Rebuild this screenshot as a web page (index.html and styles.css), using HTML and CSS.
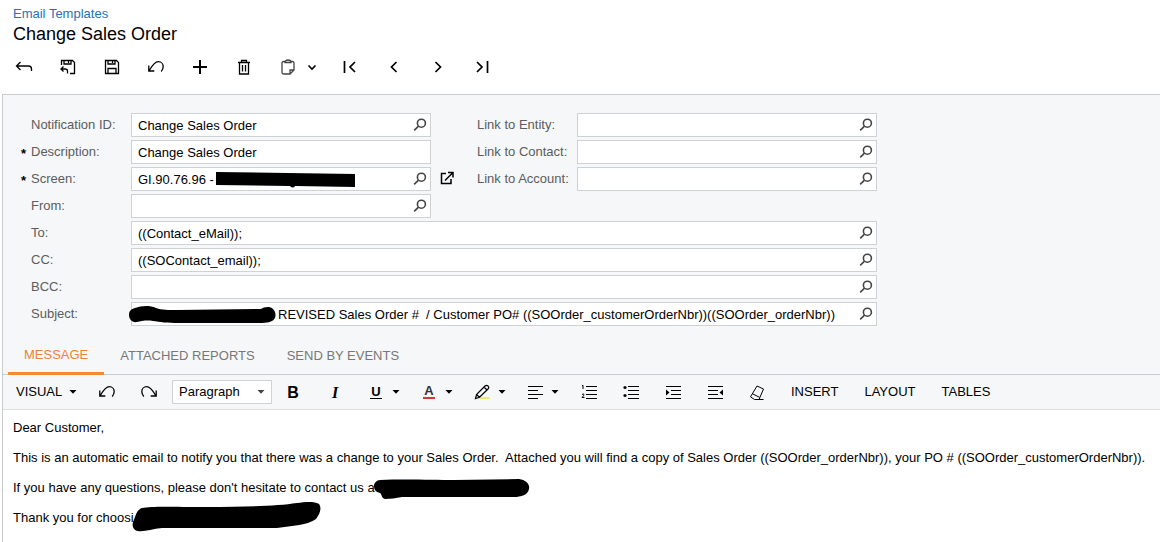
FILE: index.html
```html
<!DOCTYPE html>
<html lang="en">
<head>
<meta charset="utf-8">
<meta name="viewport" content="width=device-width, initial-scale=1">
<title>Email Templates - Change Sales Order</title>
<link rel="stylesheet" href="styles.css">
</head>
<body>
<svg class="sprite" aria-hidden="true">
  <symbol id="lookup" viewBox="0 0 14 14"><circle cx="8.4" cy="5.2" r="4"/><path d="M5.500 8.200 1.200 12.300"/></symbol>
  <symbol id="caret" viewBox="0 0 8 8"><path d="M.5 2h7L4 5.800z"/></symbol>
  <symbol id="undo" viewBox="0 0 18 18"><path d="M1.800 7.500v5.500h5.500M2.200 12.600C4.600 8.600 7.500 3.700 11.400 3.700c2.800 0 4.800 2.200 4.800 4.900 0 2-.8 3.600-2 4.900"/></symbol>
  <symbol id="redo" viewBox="0 0 18 18"><path d="M16.200 7.500v5.500h-5.500M15.800 12.600C13.400 8.600 10.500 3.700 6.600 3.700 3.800 3.700 1.800 5.900 1.800 8.600c0 2 .8 3.600 2 4.900"/></symbol>
</svg>

<header class="page-head">
  <a class="crumb" href="#">Email Templates</a>
  <h1 class="title">Change Sales Order</h1>
</header>

<div class="actions" role="toolbar" aria-label="Record actions">
  <button class="action" type="button" aria-label="Back"><svg class="icon" viewBox="0 0 18 18"><path d="M5.500 4 1.500 8l4 4M1.500 8h12c2 0 3 1.200 3 3v2"/></svg></button>
  <button class="action" type="button" aria-label="Save and close"><svg class="icon" viewBox="0 0 18 18"><path d="M2.500 7V2.500h11l2 2v11H11M5 2.500v3.500h7V2.500M9.500 3v2M4.500 8.500 2 11l2.500 2.500M2 11h4c1.500 0 2.500.8 2.500 2v2.500"/></svg></button>
  <button class="action" type="button" aria-label="Save"><svg class="icon" viewBox="0 0 18 18"><path d="M2.500 2.500h11l2 2v11h-13zM5 2.500v3.500h7V2.500M9.500 3v2M5 15.500V10.500h8v5"/></svg></button>
  <button class="action" type="button" aria-label="Undo"><svg class="icon"><use href="#undo"/></svg></button>
  <button class="action" type="button" aria-label="Add"><svg class="icon icon-bold" viewBox="0 0 18 18"><path d="M9 2v14M2 9h14"/></svg></button>
  <button class="action" type="button" aria-label="Delete"><svg class="icon" viewBox="0 0 18 18"><path d="M3 4.500h12M6.500 4.500V2.500h5v2M4.500 4.500v11.500h9V4.500M7.500 7v6.500M10.500 7v6.500"/></svg></button>
  <button class="action action-menu" type="button" aria-label="Clipboard"><svg class="icon icon-soft" viewBox="0 0 18 18"><path d="M6 3.500H4.500q-1.500 0-1.500 1.500v9.500q0 1.500 1.500 1.500H11l4-4V5q0-1.500-1.500-1.500H12M6 4.500q0-2.500 3-2.500t3 2.500zM11 16v-4h4"/></svg><svg class="chevron" viewBox="0 0 10 10"><path d="M1.500 3.500 5 7l3.500-3.500"/></svg></button>
  <button class="action" type="button" aria-label="First"><svg class="icon icon-nav" viewBox="0 0 18 18"><path d="M3.500 3v12M14 4 9 9l5 5"/></svg></button>
  <button class="action" type="button" aria-label="Previous"><svg class="icon icon-nav" viewBox="0 0 18 18"><path d="M11.500 4l-5 5 5 5"/></svg></button>
  <button class="action" type="button" aria-label="Next"><svg class="icon icon-nav" viewBox="0 0 18 18"><path d="M6.500 4l5 5-5 5"/></svg></button>
  <button class="action" type="button" aria-label="Last"><svg class="icon icon-nav" viewBox="0 0 18 18"><path d="M4 4l5 5-5 5M14.500 3v12"/></svg></button>
</div>

<main class="panel">
  <form class="form">
    <label class="label" for="nid">Notification ID:</label>
    <div class="field"><input class="input" id="nid" value="Change Sales Order"><button class="lookup" type="button" aria-label="Find notification"><svg><use href="#lookup"/></svg></button></div>
    <label class="label label-right" for="entity">Link to Entity:</label>
    <div class="field"><input class="input" id="entity"><button class="lookup" type="button" aria-label="Find entity"><svg><use href="#lookup"/></svg></button></div>

    <label class="label required" for="desc">Description:</label>
    <div class="field"><input class="input" id="desc" value="Change Sales Order"></div>
    <label class="label label-right" for="contact">Link to Contact:</label>
    <div class="field"><input class="input" id="contact"><button class="lookup" type="button" aria-label="Find contact"><svg><use href="#lookup"/></svg></button></div>

    <label class="label required" for="screen">Screen:</label>
    <div class="field"><input class="input" id="screen" value="GI.90.76.96 -"><svg class="redact redact-screen" viewBox="0 0 140 18"><path d="M0 1 139 3v13L79 15q-2 3-5 0L0 14z"/></svg><button class="lookup" type="button" aria-label="Find screen"><svg><use href="#lookup"/></svg></button></div>
    <button class="open" type="button" aria-label="Open screen"><svg viewBox="0 0 14 14"><path d="M6 2.500H1.500v10H11V8M8 1.500h5v5M13 1.500 5 9.500"/></svg></button>
    <label class="label label-right" for="account">Link to Account:</label>
    <div class="field"><input class="input" id="account"><button class="lookup" type="button" aria-label="Find account"><svg><use href="#lookup"/></svg></button></div>

    <label class="label" for="from">From:</label>
    <div class="field"><input class="input" id="from"><button class="lookup" type="button" aria-label="Find sender"><svg><use href="#lookup"/></svg></button></div>

    <label class="label" for="to">To:</label>
    <div class="field field-wide"><input class="input" id="to" value="((Contact_eMail));"><button class="lookup" type="button" aria-label="Find recipient"><svg><use href="#lookup"/></svg></button></div>

    <label class="label" for="cc">CC:</label>
    <div class="field field-wide"><input class="input" id="cc" value="((SOContact_email));"><button class="lookup" type="button" aria-label="Find CC"><svg><use href="#lookup"/></svg></button></div>

    <label class="label" for="bcc">BCC:</label>
    <div class="field field-wide"><input class="input" id="bcc"><button class="lookup" type="button" aria-label="Find BCC"><svg><use href="#lookup"/></svg></button></div>

    <label class="label" for="subject">Subject:</label>
    <div class="field field-wide"><input class="input input-subject" id="subject" value="REVISED Sales Order #  / Customer PO# ((SOOrder_customerOrderNbr))((SOOrder_orderNbr))"><svg class="redact redact-subject" viewBox="0 0 147 18"><path d="M6 2C12 0 20-1 27 2 33 4 39 4 48 4L132 3C135 1 141 0 144 3 148 7 147 13 143 15 139 17 134 17 128 17L50 17C38 17 31 16 24 15 18 14 12 15 8 16 3 17 0 13 0 9 0 5 2 3 6 2z"/></svg><button class="lookup" type="button" aria-label="Find subject field"><svg><use href="#lookup"/></svg></button></div>
  </form>

  <div class="tabs" role="tablist">
    <button class="tab tab-active" type="button" role="tab" aria-selected="true">MESSAGE</button>
    <button class="tab" type="button" role="tab" aria-selected="false">ATTACHED REPORTS</button>
    <button class="tab" type="button" role="tab" aria-selected="false">SEND BY EVENTS</button>
  </div>

  <div class="editbar" role="toolbar" aria-label="Formatting">
    <button class="text-tool visual" type="button">VISUAL<svg class="caret"><use href="#caret"/></svg></button>
    <button class="tool" type="button" aria-label="Undo"><svg class="icon"><use href="#undo"/></svg></button>
    <button class="tool" type="button" aria-label="Redo"><svg class="icon"><use href="#redo"/></svg></button>
    <div class="style-box"><select class="style-select" aria-label="Paragraph style"><option>Paragraph</option></select><svg class="caret caret-select"><use href="#caret"/></svg></div>
    <button class="tool letter bold" type="button">B</button>
    <button class="tool letter italic" type="button">I</button>
    <button class="tool split" type="button" aria-label="Underline"><span class="glyph glyph-under">U</span><svg class="caret"><use href="#caret"/></svg></button>
    <button class="tool split" type="button" aria-label="Text colour"><span class="glyph glyph-color">A</span><svg class="caret"><use href="#caret"/></svg></button>
    <button class="tool split" type="button" aria-label="Highlight"><svg class="glyph-svg" viewBox="0 0 16 16"><path class="marker" d="M5 14h10.500"/><path d="M1.500 14.500l1-4 8.500-8.500q1.500-1.300 3 0t0 3L5.500 13.300zM2.500 10.500l3 2.800M10 3l3 3"/></svg><svg class="caret"><use href="#caret"/></svg></button>
    <button class="tool split" type="button" aria-label="Align"><svg class="glyph-svg" viewBox="0 0 16 16"><path d="M1 2.500h15M1 6.500h10M1 10.500h15M1 14.500h10"/></svg><svg class="caret"><use href="#caret"/></svg></button>
    <button class="tool" type="button" aria-label="Numbered list"><svg class="glyph-svg" viewBox="0 0 16 16"><path d="M5 2.500h11M5 6.500h11M5 10.500h11M5 14.500h11"/><path class="fine" d="M1 2l1-.7V5M1 10.500q1.500-1.200 2 0 0 1-2 3h2.500"/></svg></button>
    <button class="tool" type="button" aria-label="Bulleted list"><svg class="glyph-svg" viewBox="0 0 16 16"><path d="M5 2.500h11M5 6.500h11M5 10.500h11M5 14.500h11"/><circle class="solid" cx="2" cy="3.500" r="1.600"/><circle class="solid" cx="2" cy="11.500" r="1.600"/></svg></button>
    <button class="tool" type="button" aria-label="Indent"><svg class="glyph-svg" viewBox="0 0 16 16"><path d="M1 2.500h15M6 6.500h10M6 10.500h10M1 14.500h15"/><path class="solid" d="M1 5.500v6l3.500-3z"/></svg></button>
    <button class="tool" type="button" aria-label="Outdent"><svg class="glyph-svg" viewBox="0 0 16 16"><path d="M1 2.500h15M1 6.500h10M1 10.500h10M1 14.500h15"/><path class="solid" d="M16 5.500v6l-3.500-3z"/></svg></button>
    <button class="tool" type="button" aria-label="Clear formatting"><svg class="glyph-svg" viewBox="0 0 16 16"><path class="fine" d="M8 2l6.500 3L10 15.500H5.500L1.500 12.800zM3.500 9.800l7 3.500M7 15.500h7.500"/></svg></button>
    <button class="text-tool" type="button">INSERT</button>
    <button class="text-tool" type="button">LAYOUT</button>
    <button class="text-tool" type="button">TABLES</button>
  </div>

  <article class="message">
    <p>Dear Customer,</p>
    <p class="spaced">This is an automatic email to notify you that there was a change to your Sales Order.  Attached you will find a copy of Sales Order ((SOOrder_orderNbr)), your PO # ((SOOrder_customerOrderNbr)).</p>
    <p class="masked">If you have any questions, please don't hesitate to contact us a<svg class="scribble scribble-contact" viewBox="0 0 156 20"><path d="M6 1C30 0 60 1 80 1L145 0C152 1 156 5 155 10 154 16 147 18 140 18L80 18 28 18C22 19 16 20 11 20 7 19 8 15 6 14 2 13 0 11 0 7 0 4 3 1 6 1z"/></svg></p>
    <p class="masked">Thank you for choosi<svg class="scribble scribble-company" viewBox="0 0 190 30"><path d="M10 6C20 4 40 5 75 5 115 5 145 4 165 1 173 0 182-1 187 2 190 6 188 12 184 17 176 23 160 24 145 26L30 26C20 27 12 30 6 29 1 28 0 24 1 20 4 14 4 8 10 6z"/></svg></p>
  </article>
</main>
</body>
</html>
```

FILE: styles.css
```css
* { box-sizing: border-box; }

body {
  margin: 0;
  min-height: 100vh;
  display: flex;
  flex-direction: column;
  background: #fff;
  color: #000;
  font: 13px/20px "Liberation Sans", Arial, sans-serif;
}

button, input, select { font: inherit; color: inherit; margin: 0; }
button { border: 0; padding: 0; background: none; }
svg { fill: none; stroke: currentColor; flex: none; }
.sprite { display: none; }

.page-head { padding: 4px 13px 0; }
.crumb { display: block; color: #2673b8; text-decoration: none; }
.title { margin: 0; font-size: 18px; line-height: 20px; font-weight: 400; }

/* Record toolbar */
.actions { display: flex; padding: 6px 2px 10px; }
.action { display: flex; align-items: center; justify-content: center; width: 44px; height: 34px; }
.action-menu { width: 62px; justify-content: flex-start; padding-left: 13px; gap: 10px; }
.icon { width: 18px; height: 18px; stroke-width: 1.3; }
.icon-bold { stroke-width: 2; }
.icon-nav { stroke-width: 1.7; }
.icon-soft { color: #444; }
.chevron { width: 10px; height: 10px; stroke-width: 1.6; }

.panel {
  flex: 1;
  display: flex;
  flex-direction: column;
  margin-left: 2px;
  border: solid #c9cccf;
  border-width: 1px 0 0 1px;
  background: #f5f7f9;
}

/* Form */
.form {
  display: grid;
  grid-template-columns: 100px minmax(0, 300px) 46px 100px minmax(0, 300px);
  row-gap: 3px;
  padding: 18px 28px 0;
}
.label { grid-column: 1; position: relative; line-height: 24px; color: #5c5c5c; white-space: nowrap; }
.label-right { grid-column: 4; }
.required::before { content: "*"; position: absolute; left: -10px; top: 2px; color: #000; font-weight: 700; }
.field {
  position: relative;
  display: flex;
  height: 24px;
  border: 1px solid #cfd2d5;
  background: #fff;
}
.field-wide { grid-column: 2 / 6; }
.input { flex: 1; min-width: 0; padding: 1px 0 0 6px; border: 0; background: none; outline: 0; }
.input-subject { padding-left: 146px; }
.lookup { display: flex; align-items: center; justify-content: center; width: 20px; color: #444; }
.lookup svg { width: 14px; height: 14px; stroke-width: 1.6; }
.open { display: flex; align-items: center; padding: 0 0 3px 9px; }
.open svg { width: 14px; height: 14px; stroke-width: 1.5; }

/* Marker strokes over private text */
.redact, .scribble { position: absolute; fill: #000; stroke: none; overflow: visible; }
.redact-screen { left: 84px; top: 3px; width: 140px; height: 18px; }
.redact-subject { left: -3px; top: 3px; width: 147px; height: 18px; }

/* Tabs */
.tabs { display: flex; margin-top: 12px; padding-left: 5px; border-bottom: 1px solid #c9cccf; }
.tab { height: 36px; padding: 0 16px; color: #777; }
.tab-active { margin-bottom: -1px; height: 37px; border-bottom: 3px solid #f08a36; color: #ee8238; }

/* Formatting bar */
.editbar { display: flex; align-items: center; height: 35px; border-bottom: 1px solid #dcdee1; }
.tool { display: flex; align-items: center; justify-content: center; width: 42px; height: 34px; }
.split { width: 53px; justify-content: flex-start; padding-left: 12px; gap: 8px; }
.text-tool { display: flex; align-items: center; padding: 0 13px 1px; height: 34px; }
.visual { width: 83px; gap: 7px; }
.caret { width: 8px; height: 8px; fill: currentColor; stroke: none; }
.style-box { position: relative; margin-left: 2px; width: 100px; height: 24px; }
.style-select {
  width: 100%;
  height: 100%;
  padding: 0 6px;
  border: 1px solid #cfd2d5;
  border-radius: 0;
  appearance: none;
  background: #fff;
}
.caret-select { position: absolute; right: 7px; top: 8px; color: #444; }
.letter { padding-top: 2px; font-size: 16px; }
.bold { font-weight: 700; }
.italic { font-family: "Liberation Serif", serif; font-style: italic; font-weight: 700; }
.glyph { width: 12px; margin: 0 2px; line-height: 12px; font-weight: 700; text-align: center; }
.glyph-under { border-bottom: 1px solid #000; }
.glyph-color { border-bottom: 2px solid #d43a32; color: #333; }
.glyph-svg { width: 16px; height: 16px; stroke-width: 1.2; }
.fine { stroke-width: 1; }
.solid { fill: currentColor; stroke: none; }
.marker { stroke: #ece96d; stroke-width: 2; }

/* Message */
.message { flex: 1; padding: 8px 10px 14px; background: #fff; }
.message p { margin: 0 0 10px; }
.message p:last-child { margin: 0; }
.spaced { white-space: pre-wrap; }
.masked { position: relative; width: fit-content; }
.scribble-contact { left: 100%; top: 1px; width: 156px; height: 20px; margin-left: -1px; }
.scribble-company { left: 100%; top: -6px; width: 190px; height: 30px; margin-left: -2px; }
```
